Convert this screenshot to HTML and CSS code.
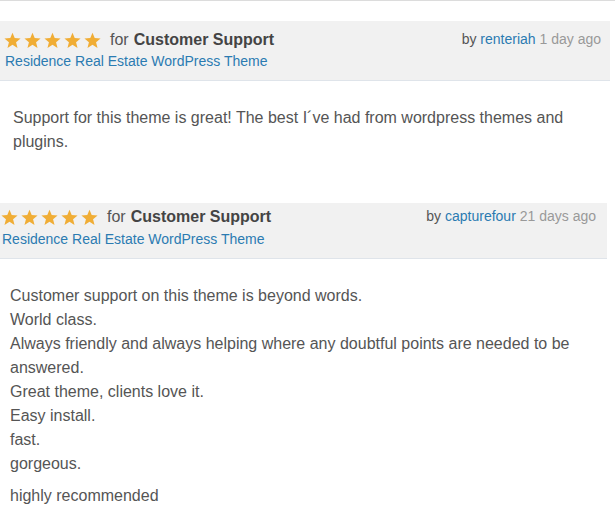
FILE: index.html
```html
<!DOCTYPE html>
<html>
<head>
<meta charset="utf-8">
<link rel="stylesheet" href="styles.css">
</head>
<body>
<div class="list">
  <div class="review review-first">
    <div class="review-head">
      <div class="head-top">
        <div class="title">
          <span class="stars">
            <svg viewBox="0 0 20 20"><polygon points="10,1 12.6,7.1 19.5,7.6 14.2,12 15.9,18.8 10,15.1 4.1,18.8 5.8,12 0.5,7.6 7.4,7.1"/></svg>
            <svg viewBox="0 0 20 20"><polygon points="10,1 12.6,7.1 19.5,7.6 14.2,12 15.9,18.8 10,15.1 4.1,18.8 5.8,12 0.5,7.6 7.4,7.1"/></svg>
            <svg viewBox="0 0 20 20"><polygon points="10,1 12.6,7.1 19.5,7.6 14.2,12 15.9,18.8 10,15.1 4.1,18.8 5.8,12 0.5,7.6 7.4,7.1"/></svg>
            <svg viewBox="0 0 20 20"><polygon points="10,1 12.6,7.1 19.5,7.6 14.2,12 15.9,18.8 10,15.1 4.1,18.8 5.8,12 0.5,7.6 7.4,7.1"/></svg>
            <svg viewBox="0 0 20 20"><polygon points="10,1 12.6,7.1 19.5,7.6 14.2,12 15.9,18.8 10,15.1 4.1,18.8 5.8,12 0.5,7.6 7.4,7.1"/></svg>
          </span>
          <span class="for">for</span> <strong>Customer Support</strong>
        </div>
        <div class="meta">by <a href="#">renteriah</a> <span class="date">1 day ago</span></div>
      </div>
      <a class="theme" href="#">Residence Real Estate WordPress Theme</a>
    </div>
    <div class="review-body">
      <p>Support for this theme is great! The best I´ve had from wordpress themes and plugins.</p>
    </div>
  </div>

  <div class="review review-second">
    <div class="review-head">
      <div class="head-top">
        <div class="title">
          <span class="stars">
            <svg viewBox="0 0 20 20"><polygon points="10,1 12.6,7.1 19.5,7.6 14.2,12 15.9,18.8 10,15.1 4.1,18.8 5.8,12 0.5,7.6 7.4,7.1"/></svg>
            <svg viewBox="0 0 20 20"><polygon points="10,1 12.6,7.1 19.5,7.6 14.2,12 15.9,18.8 10,15.1 4.1,18.8 5.8,12 0.5,7.6 7.4,7.1"/></svg>
            <svg viewBox="0 0 20 20"><polygon points="10,1 12.6,7.1 19.5,7.6 14.2,12 15.9,18.8 10,15.1 4.1,18.8 5.8,12 0.5,7.6 7.4,7.1"/></svg>
            <svg viewBox="0 0 20 20"><polygon points="10,1 12.6,7.1 19.5,7.6 14.2,12 15.9,18.8 10,15.1 4.1,18.8 5.8,12 0.5,7.6 7.4,7.1"/></svg>
            <svg viewBox="0 0 20 20"><polygon points="10,1 12.6,7.1 19.5,7.6 14.2,12 15.9,18.8 10,15.1 4.1,18.8 5.8,12 0.5,7.6 7.4,7.1"/></svg>
          </span>
          <span class="for">for</span> <strong>Customer Support</strong>
        </div>
        <div class="meta">by <a href="#">capturefour</a> <span class="date">21 days ago</span></div>
      </div>
      <a class="theme" href="#">Residence Real Estate WordPress Theme</a>
    </div>
    <div class="review-body">
      <p>Customer support on this theme is beyond words.<br>World class.<br>Always friendly and always helping where any doubtful points are needed to be answered.<br>Great theme, clients love it.<br>Easy install.<br>fast.<br>gorgeous.</p>
      <p>highly recommended</p>
    </div>
  </div>
</div>
</body>
</html>
```

FILE: styles.css
```css
html, body {
  margin: 0;
  padding: 0;
  background: #fff;
}
body {
  font-family: "Liberation Sans", Arial, Helvetica, sans-serif;
  color: #555;
  overflow: hidden;
}
a {
  color: #2b7bb1;
  text-decoration: none;
}
.list {
  border-top: 1px solid #dcdcdc;
  padding-top: 20px;
}
.review {
  width: 610px;
}
.review-second {
  margin-left: -3px;
  margin-top: 49px;
}
.review-head {
  background: #f1f1f1;
  border-bottom: 1px solid #dfe4ea;
  padding: 8px 9px 8px 4px;
}
.review-second .review-head {
  padding-top: 3px;
  padding-left: 4px;
  padding-right: 11px;
}
.head-top {
  display: flex;
  justify-content: space-between;
  align-items: flex-start;
}
.title {
  display: flex;
  align-items: center;
  font-size: 16px;
  line-height: 22px;
  color: #555;
}
.stars {
  display: inline-flex;
  gap: 3px;
  margin-right: 9px;
}
.stars svg {
  width: 17px;
  height: 17px;
  fill: #f0ad35;
  display: block;
}
.for {
  margin-right: 5px;
}
.title strong {
  color: #444;
  font-weight: bold;
}
.meta {
  font-size: 14px;
  line-height: 20px;
  color: #555;
}
.meta .date {
  color: #999;
}
.theme {
  display: block;
  font-size: 14px;
  line-height: 21px;
  padding-left: 1px;
}
.review-second .theme {
  margin-top: 1px;
}
.review-body {
  padding: 25px 13px 0 13px;
  font-size: 16px;
  line-height: 24px;
  color: #555;
}
.review-body p {
  margin: 0 0 8px 0;
}
```
